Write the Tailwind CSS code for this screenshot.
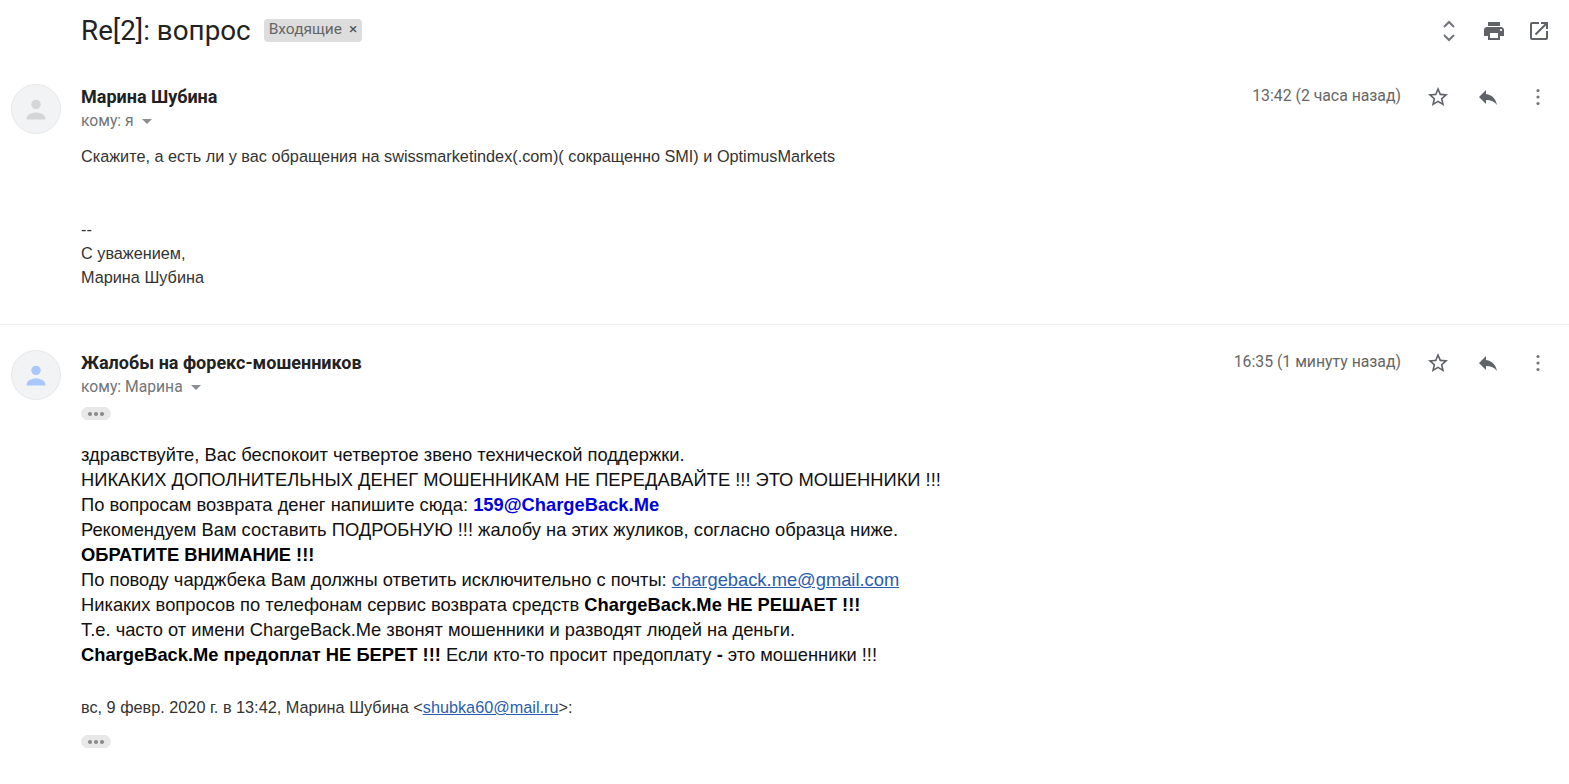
<!DOCTYPE html>
<html lang="ru">
<head>
  <meta charset="UTF-8" />
  <title>Re[2]: вопрос</title>
  <script src="https://cdn.jsdelivr.net/npm/@tailwindcss/browser@4"></script>
</head>
<body class="bg-white text-[#222] font-['Liberation_Sans',sans-serif] overflow-hidden">
  <div class="h-[784px] w-[1569px]">
    <!-- subject -->
    <div class="flex items-center h-[62px] pl-[81px] pr-[18px]">
      <h1 class="font-['Roboto',sans-serif] text-[27.8px] leading-[32px] text-[#222]">Re[2]: вопрос</h1>
      <span class="ml-[13px] mb-[2px] flex items-center h-[23px] px-[5px] rounded-[4px] bg-[#dddddd] text-[#666] text-[15.5px] font-['Roboto',sans-serif]">Входящие <span class="ml-[7px] text-[#555]">×</span></span>
      <div class="ml-auto flex items-center gap-[21px] text-[#5f6368]">
        <svg class="w-[24px] h-[24px]" viewBox="0 0 24 24" fill="none" stroke="#70757a" stroke-width="2"><path d="M7 8l5-5 5 5M7 16l5 5 5-5" /></svg>
        <svg class="w-[24px] h-[24px]" viewBox="0 0 24 24" fill="currentColor"><path d="M19 8H5c-1.66 0-3 1.34-3 3v6h4v4h12v-4h4v-6c0-1.66-1.34-3-3-3zm-3 11H8v-5h8v5zm3-7c-.55 0-1-.45-1-1s.45-1 1-1 1 .45 1 1-.45 1-1 1zm-1-9H6v4h12V3z" /></svg>
        <svg class="w-[24px] h-[24px]" viewBox="0 0 24 24" fill="currentColor"><path d="M19 19H5V5h7V3H5a2 2 0 0 0-2 2v14a2 2 0 0 0 2 2h14c1.1 0 2-.9 2-2v-7h-2v7zM14 3v2h3.59l-9.83 9.83 1.41 1.41L19 6.41V10h2V3h-7z" /></svg>
      </div>
    </div>

    <!-- first message -->
    <div class="relative h-[263px] border-b border-[#ececec] flex">
      <div class="w-[81px] pl-[11px] pt-[22px] shrink-0">
        <div class="w-[50px] h-[50px] rounded-full bg-[#f1f3f4] border border-[#e8e8e8] flex items-center justify-center">
          <svg class="w-[28px] h-[28px]" viewBox="0 0 24 24" fill="#d4d6d8"><circle cx="12" cy="8" r="4" /><path d="M4 20c0-3 4-5 8-5s8 2 8 5v1H4z" /></svg>
        </div>
      </div>
      <div class="flex-1 min-w-0 pt-[24px]">
        <div class="flex items-start">
          <div class="flex-1">
            <div class="font-['Roboto',sans-serif] font-bold text-[18px] leading-[22px] text-[#222]">Марина Шубина</div>
            <div class="flex items-center font-['Roboto',sans-serif] text-[15.7px] leading-[20px] mt-[3px] text-[#70757a]">кому: я <span class="ml-[8px] w-0 h-0 border-x-[5px] border-x-transparent border-t-[5px] border-t-[#8a8e92]"></span></div>
          </div>
          <span class="-mt-[1px] font-['Roboto',sans-serif] text-[15.8px] leading-[22px] text-[#666]">13:42 (2 часа назад)</span>
          <div class="-mt-[1px] ml-[25px] mr-[19px] flex items-center gap-[26px] text-[#5f6368]">
            <svg class="w-[24px] h-[24px]" viewBox="0 0 24 24" fill="currentColor"><path d="M22 9.24l-7.19-.62L12 2 9.19 8.63 2 9.24l5.46 4.73L5.82 21 12 17.27 18.18 21l-1.63-7.03L22 9.24zM12 15.4l-3.76 2.27 1-4.28-3.32-2.88 4.38-.38L12 6.1l1.71 4.04 4.38.38-3.32 2.88 1 4.28L12 15.4z" /></svg>
            <svg class="w-[24px] h-[24px]" viewBox="0 0 24 24" fill="currentColor"><path d="M10 9V5l-7 7 7 7v-4.1c5 0 8.5 1.6 11 5.1-1-5-4-10-11-11z" /></svg>
            <svg class="w-[24px] h-[24px]" viewBox="0 0 24 24" fill="#777"><circle cx="12" cy="5.5" r="1.6" /><circle cx="12" cy="12" r="1.6" /><circle cx="12" cy="18.5" r="1.6" /></svg>
          </div>
        </div>
        <div class="mt-[13px] text-[16.25px] leading-[24px] text-[#333]">
          <p>Скажите, а есть ли у вас обращения на swissmarketindex(.com)( сокращенно SMI) и OptimusMarkets</p>
          <div class="mt-[49px]">--</div>
          <div>С уважением,</div>
          <div>Марина Шубина</div>
        </div>
      </div>
    </div>

    <!-- second message -->
    <div class="flex">
      <div class="w-[81px] pl-[11px] pt-[25px] shrink-0">
        <div class="w-[50px] h-[50px] rounded-full bg-[#f1f3f4] border border-[#e8e8e8] flex items-center justify-center">
          <svg class="w-[28px] h-[28px]" viewBox="0 0 24 24" fill="#a8c7fa"><circle cx="12" cy="8" r="4" /><path d="M4 20c0-3 4-5 8-5s8 2 8 5v1H4z" /></svg>
        </div>
      </div>
      <div class="flex-1 min-w-0 pt-[27px]">
        <div class="flex items-start">
          <div class="flex-1">
            <div class="font-['Roboto',sans-serif] font-bold text-[18px] leading-[22px] text-[#222]">Жалобы на форекс-мошенников</div>
            <div class="flex items-center font-['Roboto',sans-serif] text-[15.7px] leading-[20px] mt-[3px] text-[#70757a]">кому: Марина <span class="ml-[8px] w-0 h-0 border-x-[5px] border-x-transparent border-t-[5px] border-t-[#8a8e92]"></span></div>
          </div>
          <span class="-mt-[1px] font-['Roboto',sans-serif] text-[15.8px] leading-[22px] text-[#666]">16:35 (1 минуту назад)</span>
          <div class="-mt-[1px] ml-[25px] mr-[19px] flex items-center gap-[26px] text-[#5f6368]">
            <svg class="w-[24px] h-[24px]" viewBox="0 0 24 24" fill="currentColor"><path d="M22 9.24l-7.19-.62L12 2 9.19 8.63 2 9.24l5.46 4.73L5.82 21 12 17.27 18.18 21l-1.63-7.03L22 9.24zM12 15.4l-3.76 2.27 1-4.28-3.32-2.88 4.38-.38L12 6.1l1.71 4.04 4.38.38-3.32 2.88 1 4.28L12 15.4z" /></svg>
            <svg class="w-[24px] h-[24px]" viewBox="0 0 24 24" fill="currentColor"><path d="M10 9V5l-7 7 7 7v-4.1c5 0 8.5 1.6 11 5.1-1-5-4-10-11-11z" /></svg>
            <svg class="w-[24px] h-[24px]" viewBox="0 0 24 24" fill="#777"><circle cx="12" cy="5.5" r="1.6" /><circle cx="12" cy="12" r="1.6" /><circle cx="12" cy="18.5" r="1.6" /></svg>
          </div>
        </div>
        <div class="mt-[10px] w-[30px] h-[13px] rounded-full bg-[#e8e8e8] flex items-center justify-center gap-[2px]">
          <span class="w-[4px] h-[4px] rounded-full bg-[#888]"></span><span class="w-[4px] h-[4px] rounded-full bg-[#888]"></span><span class="w-[4px] h-[4px] rounded-full bg-[#888]"></span>
        </div>
        <div class="mt-[22px] text-[18.34px] leading-[25px] text-[#111]">
          <div>здравствуйте, Вас беспокоит четвертое звено технической поддержки.</div>
          <div>НИКАКИХ ДОПОЛНИТЕЛЬНЫХ ДЕНЕГ МОШЕННИКАМ НЕ ПЕРЕДАВАЙТЕ !!! ЭТО МОШЕННИКИ !!!</div>
          <div>По вопросам возврата денег напишите сюда: <b class="text-[#0000e0]">159@ChargeBack.Me</b></div>
          <div>Рекомендуем Вам составить ПОДРОБНУЮ !!! жалобу на этих жуликов, согласно образца ниже.</div>
          <div><b class="text-black">ОБРАТИТЕ ВНИМАНИЕ !!!</b></div>
          <div>По поводу чарджбека Вам должны ответить исключительно с почты: <a href="#" class="text-[#2a5db0] underline">chargeback.me@gmail.com</a></div>
          <div>Никаких вопросов по телефонам сервис возврата средств <b class="text-black">ChargeBack.Me НЕ РЕШАЕТ !!!</b></div>
          <div>Т.е. часто от имени ChargeBack.Me звонят мошенники и разводят людей на деньги.</div>
          <div><b class="text-black">ChargeBack.Me предоплат НЕ БЕРЕТ !!!</b> Если кто-то просит предоплату <b>-</b> это мошенники !!!</div>
        </div>
        <div class="mt-[28px] text-[16.25px] leading-[24px] text-[#333]">вс, 9 февр. 2020 г. в 13:42, Марина Шубина &lt;<a href="#" class="text-[#2a5db0] underline">shubka60@mail.ru</a>&gt;:</div>
        <div class="mt-[16px] w-[30px] h-[13px] rounded-full bg-[#e8e8e8] flex items-center justify-center gap-[2px]">
          <span class="w-[4px] h-[4px] rounded-full bg-[#888]"></span><span class="w-[4px] h-[4px] rounded-full bg-[#888]"></span><span class="w-[4px] h-[4px] rounded-full bg-[#888]"></span>
        </div>
      </div>
    </div>
  </div>
</body>
</html>
